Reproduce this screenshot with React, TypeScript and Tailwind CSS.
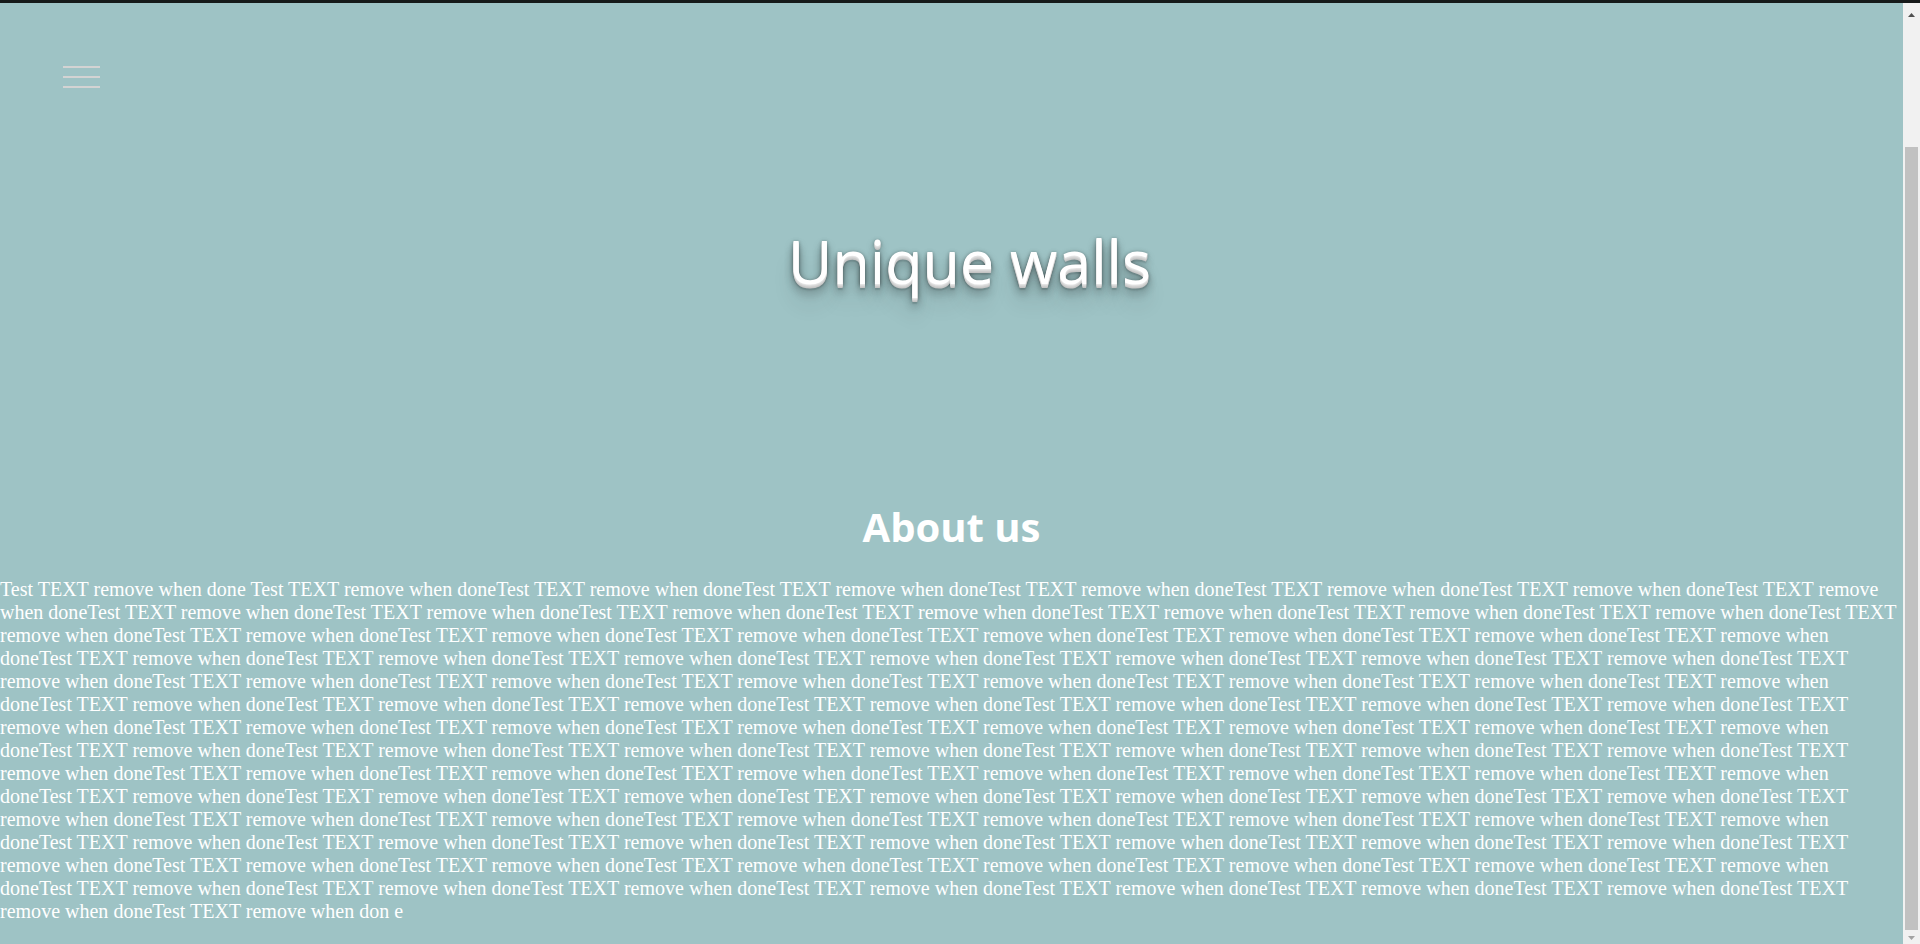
const UNIT = 'Test TEXT remove when done'

// placeholder copy, as on the live page
const aboutText = UNIT + ' ' + UNIT.repeat(105) + 'Test TEXT remove when don e'

function Hamburger() {
  return (
    <button className="flex flex-col gap-[8px]" aria-label="Menu">
      <span className="block h-[2px] w-[37px] bg-[#d3d3d3]" />
      <span className="block h-[2px] w-[37px] bg-[#d3d3d3]" />
      <span className="block h-[2px] w-[37px] bg-[#d3d3d3]" />
    </button>
  )
}

function Scrollbar() {
  return (
    <div className="w-[17px] shrink-0 bg-[#f1f1f1] flex flex-col items-center">
      <svg width="7" height="4" viewBox="0 0 7 4" className="mt-[10px]">
        <path d="M3.5 0L7 4H0z" fill="#505050" />
      </svg>
      <div className="mt-[130px] h-[783px] w-[13px] bg-[#c1c1c1]" />
      <svg width="7" height="4" viewBox="0 0 7 4" className="mt-[6px]">
        <path d="M0 0H7L3.5 4z" fill="#a3a3a3" />
      </svg>
    </div>
  )
}

export default function App() {
  return (
    <div className="h-[944px] w-full overflow-hidden flex flex-col bg-[#9ec3c5]">
      <div className="h-[3px] shrink-0 bg-[#161a1a]" />

      <div className="flex flex-1 min-h-0">
        <main className="flex-1 min-w-0 overflow-hidden">
          <header className="pt-[63px] pl-[63px]">
            <Hamburger />
          </header>

          {/* Hero */}
          <h1
            className="mt-[142px] pl-[36px] text-center text-white text-[61px] leading-none font-medium [font-family:'Open_Sans',sans-serif] [text-shadow:0_1px_0_#e4e4e4,0_2px_0_#d8d8d8,0_3px_0_#cdcdcd,0_4px_0_#c4c4c4,0_6px_1px_rgba(0,0,0,0.1),0_0_5px_rgba(0,0,0,0.1),0_1px_3px_rgba(0,0,0,0.3),0_3px_5px_rgba(0,0,0,0.2),0_5px_10px_rgba(0,0,0,0.25),0_10px_10px_rgba(0,0,0,0.2),0_20px_20px_rgba(0,0,0,0.15)]"
          >
            Unique walls
          </h1>

          {/* About */}
          <section>
            <h2 className="mt-[216px] text-center text-white text-[40px] leading-none font-bold [font-family:'Open_Sans',sans-serif]">
              About us
            </h2>
            <p className="mt-[31px] text-white text-[20.03px] leading-[23px] [font-family:'Liberation_Serif','Times_New_Roman',serif] break-words">
              {aboutText}
            </p>
          </section>
        </main>

        <Scrollbar />
      </div>
    </div>
  )
}
